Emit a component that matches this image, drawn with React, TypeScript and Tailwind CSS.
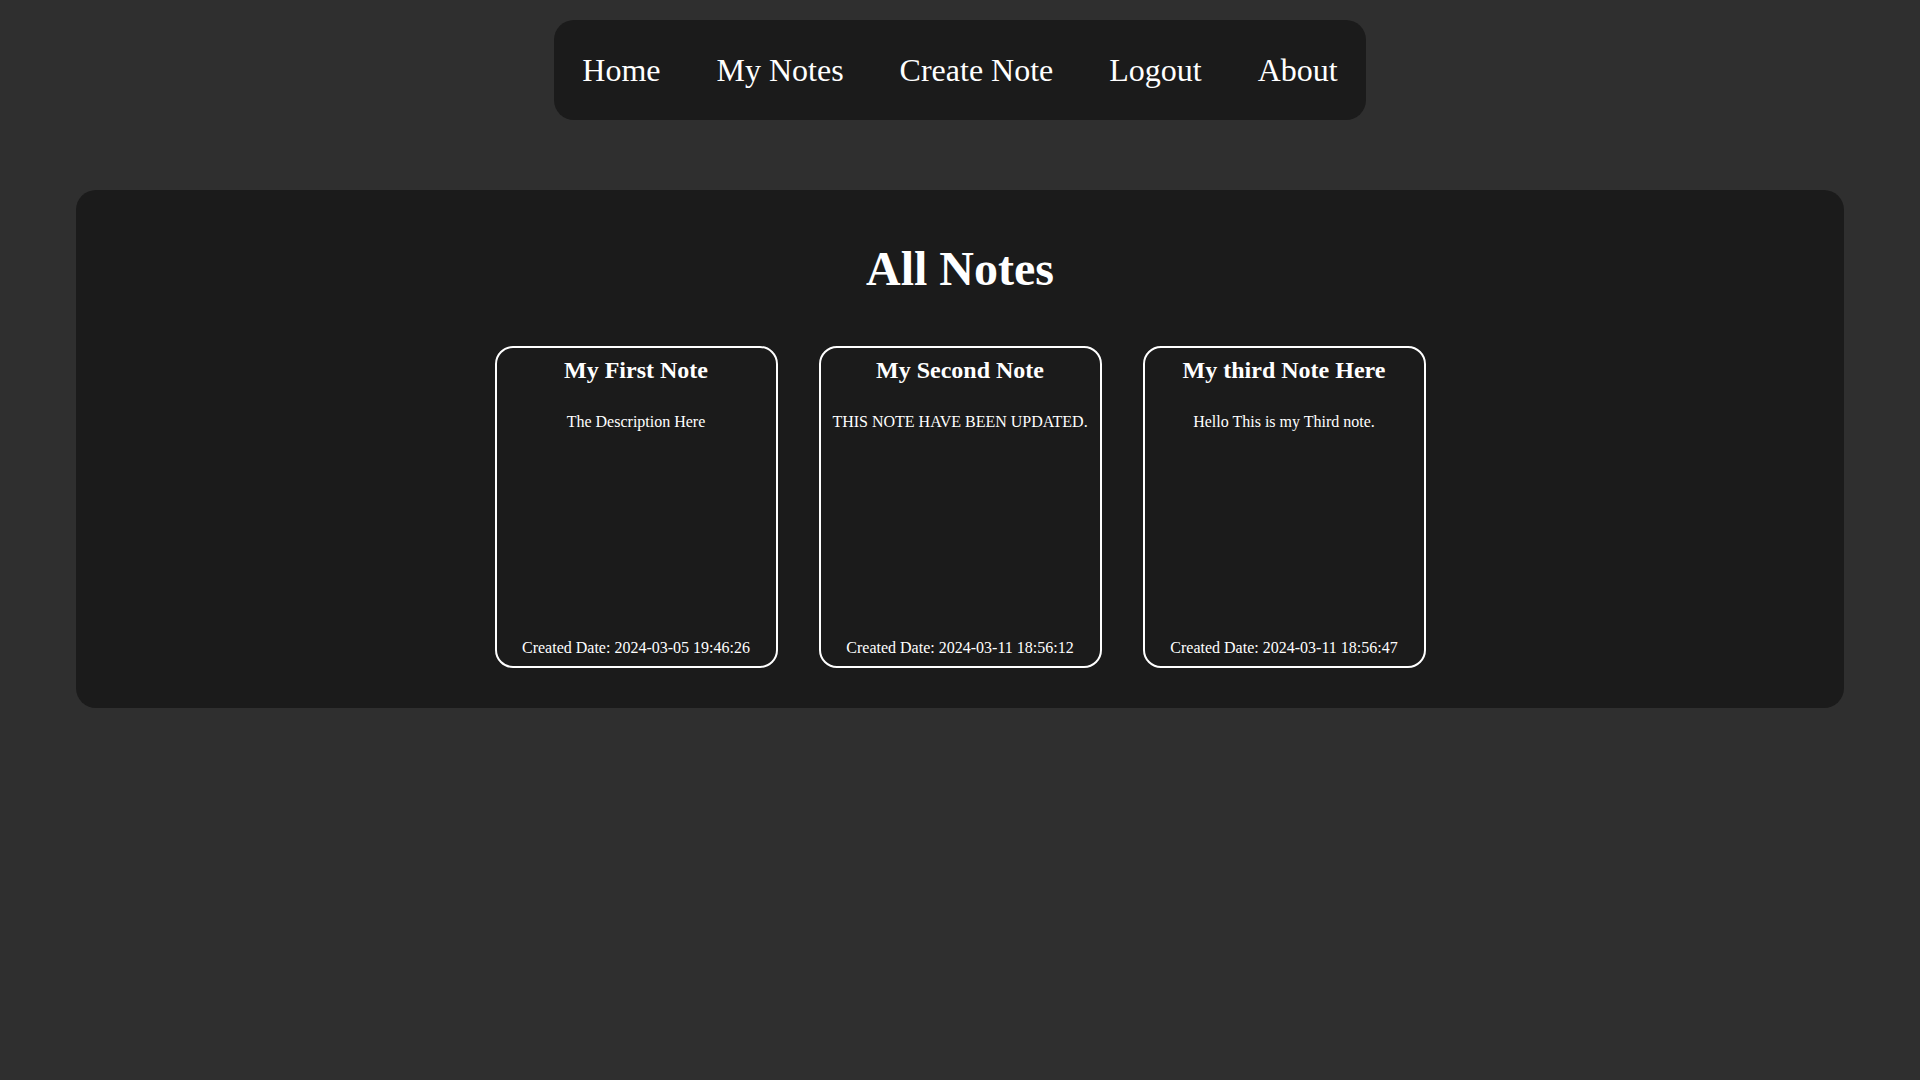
import React from 'react';

const notes = [
  { id: 1, title: 'My First Note', description: 'The Description Here', created: '2024-03-05 19:46:26' },
  { id: 2, title: 'My Second Note', description: 'THIS NOTE HAVE BEEN UPDATED.', created: '2024-03-11 18:56:12' },
  { id: 3, title: 'My third Note Here', description: 'Hello This is my Third note.', created: '2024-03-11 18:56:47' },
];

const links = ['Home', 'My Notes', 'Create Note', 'Logout', 'About'];

export default function App() {
  return (
    <div className="min-h-screen bg-[#2f2f2f] text-white font-['Liberation_Serif','Times_New_Roman',serif] pt-5 pb-10">
      <nav className="mx-auto w-fit h-[100px] flex items-center bg-[#1b1b1b] rounded-[20px]">
        {links.map(link => (
          <a key={link} href="#" className="px-7 text-[32px] leading-[36px] text-white">
            {link}
          </a>
        ))}
      </nav>

      <main className="mx-[76px] mt-[70px] bg-[#1b1b1b] rounded-[20px] pt-[52px] pb-10">
        <h1 className="text-center text-[48px] leading-[53px] font-bold">All Notes</h1>
        <div className="mt-[51px] flex justify-center gap-[41px]">
          {notes.map(note => (
            <NoteCard key={note.id} {...note} />
          ))}
        </div>
      </main>
    </div>
  );
}

function NoteCard({ title, description, created }: any) {
  return (
    <div className="w-[283px] h-[322px] border-2 border-white rounded-[18px] flex flex-col items-center text-center px-[10px] pt-[9px] pb-[9px]">
      <h2 className="text-[24px] leading-[27px] font-bold">{title}</h2>
      <p className="mt-[29px] text-[16px] leading-[18px]">{description}</p>
      <p className="mt-auto text-[16px] leading-[18px]">Created Date: {created}</p>
    </div>
  );
}
